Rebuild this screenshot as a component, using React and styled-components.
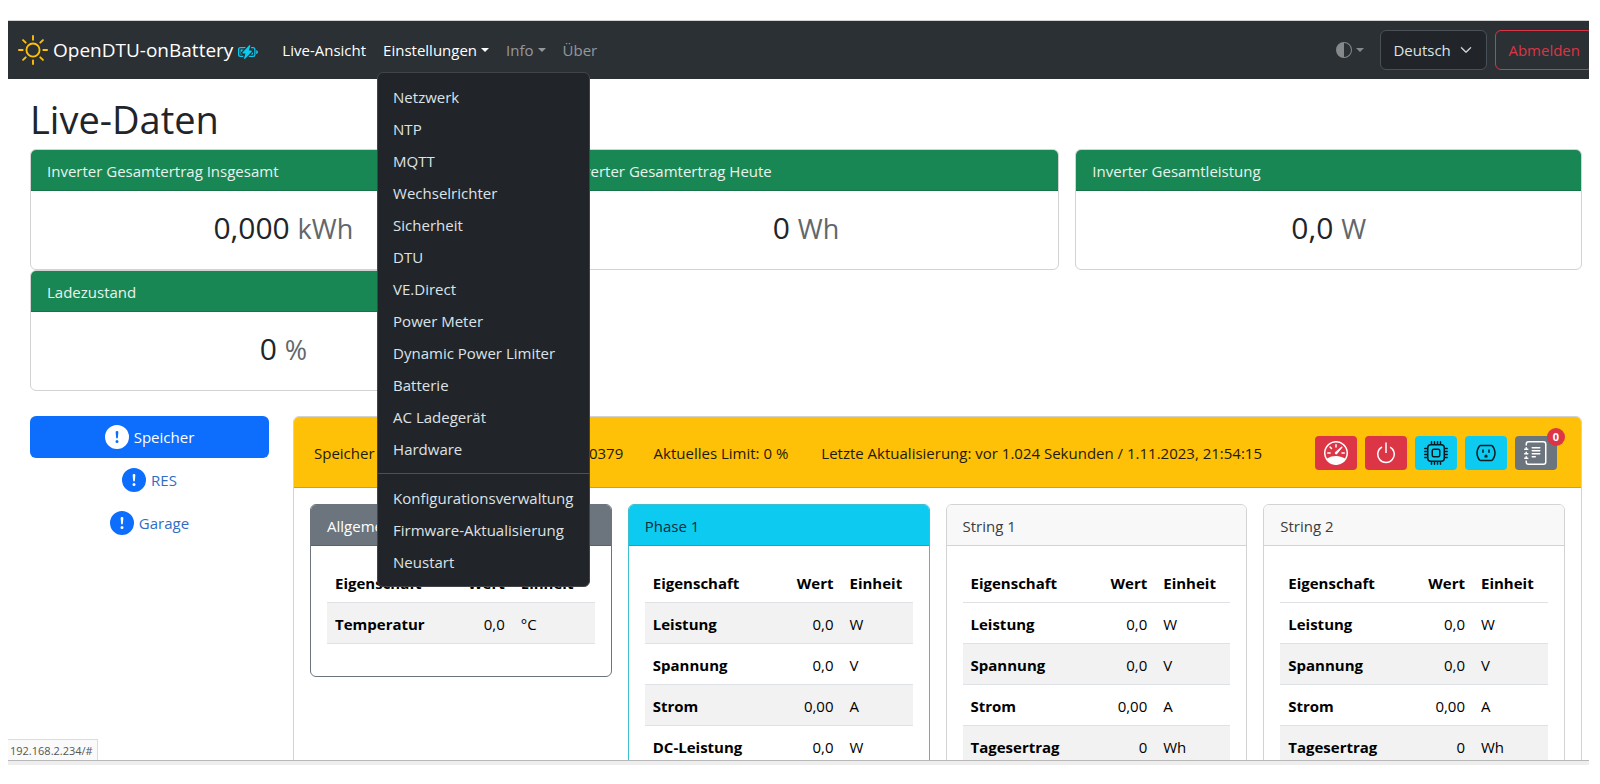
import React, { useState } from "react";
import styled, { createGlobalStyle } from "styled-components";
import {
    BsSun,
    BsBatteryCharging,
    BsCircleHalf,
    BsChevronDown,
    BsSpeedometer,
    BsPower,
    BsCpu,
    BsOutlet,
    BsJournalText,
    BsExclamationCircleFill,
} from "react-icons/bs";

const GlobalStyle = createGlobalStyle`
    *, *::before, *::after { box-sizing: border-box; }
    body {
        margin: 0;
        background: #fff;
        color: #212529;
        font-family: "Segoe UI", "Open Sans", "Noto Sans", sans-serif;
        font-size: 15px;
        line-height: 24px;
    }
    button, select { font: inherit; }
    a { text-decoration: none; }
`;

const Page = styled.div`
    display: flex;
    height: 100vh;
    padding: 20px 11px 19px 8px;
`;

const Viewport = styled.div`
    position: relative;
    flex: 1;
    min-width: 0;
    overflow: hidden;
    border-top: 1px solid #d4d4d4;
    border-bottom: 4px solid #eee;
`;

/* ---------- navbar ---------- */

const Navbar = styled.nav`
    display: flex;
    align-items: center;
    height: 58px;
    margin-right: -4px;
    padding-left: 10px;
    background: #2b3035;
`;

const Brand = styled.a`
    display: flex;
    align-items: center;
    gap: 5px;
    margin-right: 16px;
    color: #fff;
    font-size: 19px;
    line-height: 30px;
    white-space: nowrap;
`;

const SunIcon = styled(BsSun)`
    color: #ffc107;
`;

const BatteryIcon = styled(BsBatteryCharging)`
    color: #0dcaf0;
    margin-top: 4px;
`;

const NavLinks = styled.div`
    display: flex;
    gap: 1px;
`;

const NavItem = styled.div`
    position: relative;
`;

const NavLink = styled.a`
    display: flex;
    align-items: center;
    gap: 4px;
    padding: 8px;
    color: ${(p) => (p.$active ? "#fff" : "rgba(255, 255, 255, 0.5)")};
    white-space: nowrap;
`;

const Caret = styled.span`
    border-top: 4px solid;
    border-left: 4px solid transparent;
    border-right: 4px solid transparent;
`;

const Menu = styled.div`
    position: absolute;
    top: 42px;
    left: 2px;
    z-index: 10;
    width: 213px;
    padding: 8px 0;
    background: #212529;
    border: 1px solid #41454a;
    border-radius: 6px;
`;

const MenuItem = styled.a`
    display: block;
    padding: 4px 15px;
    color: #dee2e6;
    white-space: nowrap;
`;

const MenuDivider = styled.hr`
    margin: 8px 0;
    border: 0;
    border-top: 1px solid #4d5154;
`;

const NavRight = styled.div`
    display: flex;
    align-items: center;
    gap: 8px;
    margin-left: auto;
`;

const ThemeButton = styled.button`
    display: flex;
    align-items: center;
    gap: 4px;
    padding: 8px;
    background: none;
    border: 0;
    color: #85898c;
`;

const LanguageBox = styled.div`
    position: relative;
    display: flex;
    align-items: center;
    color: #dee2e6;

    svg {
        position: absolute;
        right: 15px;
        pointer-events: none;
    }
`;

const LanguageSelect = styled.select`
    width: 107px;
    height: 40px;
    padding: 0 12px;
    appearance: none;
    color: #dee2e6;
    background: #212529;
    border: 1px solid #495057;
    border-radius: 6px;
`;

const LogoutButton = styled.button`
    height: 40px;
    padding: 0 12px;
    color: #dc3545;
    background: none;
    border: 1px solid #dc3545;
    border-radius: 6px;
`;

/* ---------- content ---------- */

const Content = styled.main`
    padding: 16px 7px 0 22px;
`;

const Title = styled.h1`
    margin: 0 0 6px;
    font-size: 38px;
    font-weight: 400;
    line-height: 48px;
`;

const Totals = styled.div`
    display: grid;
    grid-template-columns: repeat(3, 1fr);
    column-gap: 16px;
`;

const cardColors = {
    success: { bg: "#198754", color: "#e8f3ee", line: "#d3d3d3", rule: "#157347" },
    secondary: { bg: "#6c757d", color: "#fff", line: "#6c757d", rule: "#5b636a" },
    info: { bg: "#0dcaf0", color: "#0b2e3a", line: "#3cc0d0", rule: "#0bacc9" },
    light: { bg: "#f8f8f8", color: "#383d42", line: "#d3d3d3", rule: "#d3d3d3" },
};

const Card = styled.section`
    border: 1px solid ${(p) => cardColors[p.$variant].line};
    border-radius: 6px;
    overflow: hidden;
`;

const CardHeader = styled.div`
    padding: 9px 16px 7px;
    color: ${(p) => cardColors[p.$variant].color};
    background: ${(p) => cardColors[p.$variant].bg};
    border-bottom: 1px solid ${(p) => cardColors[p.$variant].rule};
`;

const TotalValue = styled.h2`
    margin: 0;
    padding: 18px 16px 22px;
    font-size: 30px;
    font-weight: 400;
    line-height: 38px;
    text-align: center;

    small {
        color: #62676b;
        font-size: 27px;
        line-height: 30px;
    }
`;

const Inverters = styled.div`
    display: grid;
    grid-template-columns: 239px 1fr;
    align-items: start;
    gap: 24px;
    margin-top: 25px;
`;

const Pills = styled.div`
    display: flex;
    flex-direction: column;
    gap: 1px;
`;

const Pill = styled.button`
    display: flex;
    align-items: center;
    justify-content: center;
    gap: 5px;
    height: 42px;
    color: ${(p) => (p.$active ? "#fff" : "#2f6ec4")};
    background: ${(p) => (p.$active ? "#0d6efd" : "none")};
    border: 0;
    border-radius: 6px;

    svg {
        color: ${(p) => (p.$active ? "#fff" : "#0d6efd")};
    }
`;

const Panel = styled.section`
    border: 1px solid #d3d3d3;
    border-radius: 6px;
`;

const PanelHeader = styled.div`
    display: flex;
    align-items: center;
    justify-content: space-between;
    height: 71px;
    padding: 2px 24px 0 20px;
    color: #1f1a08;
    background: #ffc107;
    border-bottom: 1px solid #c9a227;
    border-radius: 5px 5px 0 0;
`;

const PanelInfo = styled.div`
    display: flex;
    gap: 33px;
    white-space: nowrap;
`;

const SerialNumber = styled.div`
    width: 213px;
    text-align: right;
`;

const Tools = styled.div`
    display: flex;
    gap: 8px;
`;

const toolColors = {
    danger: { bg: "#dc3545", color: "#fff" },
    info: { bg: "#0dcaf0", color: "#051b20" },
    secondary: { bg: "#6c757d", color: "#fff" },
};

const ToolButton = styled.button`
    position: relative;
    display: flex;
    align-items: center;
    justify-content: center;
    width: 42px;
    height: 34px;
    padding: 0;
    color: ${(p) => toolColors[p.$variant].color};
    background: ${(p) => toolColors[p.$variant].bg};
    border: 0;
    border-radius: 4px;
`;

const Badge = styled.span`
    position: absolute;
    top: -8px;
    right: -8px;
    width: 18px;
    height: 18px;
    color: #fff;
    background: #dc3545;
    border-radius: 9px;
    font-size: 11px;
    font-weight: 700;
    line-height: 18px;
`;

const Channels = styled.div`
    display: grid;
    grid-template-columns: repeat(4, 1fr);
    align-items: start;
    gap: 16px;
    padding: 16px;
`;

const TableBox = styled.div`
    padding: 16px 16px 32px;
`;

const Table = styled.table`
    width: 100%;
    border-collapse: collapse;
    color: #000;

    th, td {
        padding: 9px 8px 7px;
        border-bottom: 1px solid #dee2e6;
        text-align: left;
        font-weight: 400;
        white-space: nowrap;
    }
    th { font-weight: 700; }
    th:nth-child(2), td:nth-child(2) { text-align: right; }
    th:nth-child(3) { width: ${(p) => p.$unitWidth}px; }
    tbody tr:nth-child(${(p) => p.$stripe}) { background: #f2f2f2; }
`;

const StatusText = styled.div`
    position: absolute;
    left: 0;
    bottom: 0;
    height: 22px;
    padding: 0 4px 0 2px;
    color: #555;
    background: #fafafa;
    border: 1px solid #dcdcdc;
    border-left: 0;
    font-size: 11px;
    line-height: 22px;
`;

const BottomLine = styled.div`
    position: absolute;
    left: 0;
    right: 0;
    bottom: 0;
    border-top: 1px solid #b8b8b8;
`;

const settings = [
    "Netzwerk",
    "NTP",
    "MQTT",
    "Wechselrichter",
    "Sicherheit",
    "DTU",
    "VE.Direct",
    "Power Meter",
    "Dynamic Power Limiter",
    "Batterie",
    "AC Ladegerät",
    "Hardware",
];
const maintenance = ["Konfigurationsverwaltung", "Firmware-Aktualisierung", "Neustart"];

const totals = [
    { title: "Inverter Gesamtertrag Insgesamt", value: "0,000", unit: "kWh" },
    { title: "Inverter Gesamtertrag Heute", value: "0", unit: "Wh" },
    { title: "Inverter Gesamtleistung", value: "0,0", unit: "W" },
    { title: "Ladezustand", value: "0", unit: "%" },
];

const inverters = ["Speicher", "RES", "Garage"];

const stringRows = [
    ["Leistung", "0,0", "W"],
    ["Spannung", "0,0", "V"],
    ["Strom", "0,00", "A"],
    ["Tagesertrag", "0", "Wh"],
];

const channels = [
    { title: "Allgemein", variant: "secondary", stripe: "odd", unitWidth: 82, rows: [["Temperatur", "0,0", "°C"]] },
    {
        title: "Phase 1",
        variant: "info",
        stripe: "odd",
        unitWidth: 71,
        rows: [
            ["Leistung", "0,0", "W"],
            ["Spannung", "0,0", "V"],
            ["Strom", "0,00", "A"],
            ["DC-Leistung", "0,0", "W"],
        ],
    },
    { title: "String 1", variant: "light", stripe: "even", unitWidth: 75, rows: stringRows },
    { title: "String 2", variant: "light", stripe: "even", unitWidth: 75, rows: stringRows },
];

const tools = [
    { label: "Limit", variant: "danger", Icon: BsSpeedometer },
    { label: "Ein/Aus", variant: "danger", Icon: BsPower },
    { label: "Geräteinfo", variant: "info", Icon: BsCpu },
    { label: "Netzprofil", variant: "info", Icon: BsOutlet },
    { label: "Ereignisse", variant: "secondary", Icon: BsJournalText, count: 0 },
];

function Header() {
    const [menuOpen, setMenuOpen] = useState(true);
    const [language, setLanguage] = useState("de");

    return (
        <Navbar>
            <Brand href="#">
                <SunIcon size={30} />
                OpenDTU-onBattery
                <BatteryIcon size={20} />
            </Brand>
            <NavLinks>
                <NavLink href="#" $active>Live-Ansicht</NavLink>
                <NavItem>
                    <NavLink href="#" $active onClick={() => setMenuOpen(!menuOpen)}>
                        Einstellungen<Caret />
                    </NavLink>
                    {menuOpen && (
                        <Menu>
                            {settings.map((name) => <MenuItem key={name} href="#">{name}</MenuItem>)}
                            <MenuDivider />
                            {maintenance.map((name) => <MenuItem key={name} href="#">{name}</MenuItem>)}
                        </Menu>
                    )}
                </NavItem>
                <NavLink href="#">Info<Caret /></NavLink>
                <NavLink href="#">Über</NavLink>
            </NavLinks>
            <NavRight>
                <ThemeButton aria-label="Farbschema"><BsCircleHalf size={16} /><Caret /></ThemeButton>
                <LanguageBox>
                    <LanguageSelect aria-label="Sprache" value={language} onChange={(e) => setLanguage(e.target.value)}>
                        <option value="de">Deutsch</option>
                        <option value="en">English</option>
                        <option value="fr">Français</option>
                    </LanguageSelect>
                    <BsChevronDown size={12} strokeWidth={1} />
                </LanguageBox>
                <LogoutButton>Abmelden</LogoutButton>
            </NavRight>
        </Navbar>
    );
}

function ChannelCard({ title, variant, stripe, unitWidth, rows }) {
    return (
        <Card $variant={variant}>
            <CardHeader $variant={variant}>{title}</CardHeader>
            <TableBox>
                <Table $stripe={stripe} $unitWidth={unitWidth}>
                    <thead>
                        <tr>
                            <th scope="col">Eigenschaft</th>
                            <th scope="col">Wert</th>
                            <th scope="col">Einheit</th>
                        </tr>
                    </thead>
                    <tbody>
                        {rows.map(([name, value, unit]) => (
                            <tr key={name}>
                                <th scope="row">{name}</th>
                                <td>{value}</td>
                                <td>{unit}</td>
                            </tr>
                        ))}
                    </tbody>
                </Table>
            </TableBox>
        </Card>
    );
}

export default function App() {
    const [selected, setSelected] = useState("Speicher");

    return (
        <Page>
            <GlobalStyle />
            <Viewport>
                <Header />
                <Content>
                    <Title>Live-Daten</Title>
                    <Totals>
                        {totals.map((t) => (
                            <Card key={t.title} $variant="success">
                                <CardHeader $variant="success">{t.title}</CardHeader>
                                <TotalValue>{t.value} <small>{t.unit}</small></TotalValue>
                            </Card>
                        ))}
                    </Totals>
                    <Inverters>
                        <Pills>
                            {inverters.map((name) => (
                                <Pill key={name} $active={name === selected} onClick={() => setSelected(name)}>
                                    <BsExclamationCircleFill size={24} />
                                    {name}
                                </Pill>
                            ))}
                        </Pills>
                        <Panel>
                            <PanelHeader>
                                <PanelInfo>
                                    <div>{selected}</div>
                                    <SerialNumber>Seriennummer: 112100120379</SerialNumber>
                                    <div>Aktuelles Limit: 0 %</div>
                                    <div>Letzte Aktualisierung: vor 1.024 Sekunden / 1.11.2023, 21:54:15</div>
                                </PanelInfo>
                                <Tools>
                                    {tools.map(({ label, variant, Icon, count }) => (
                                        <ToolButton key={label} aria-label={label} $variant={variant}>
                                            <Icon size={24} />
                                            {count !== undefined && <Badge>{count}</Badge>}
                                        </ToolButton>
                                    ))}
                                </Tools>
                            </PanelHeader>
                            <Channels>
                                {channels.map((c) => <ChannelCard key={c.title} {...c} />)}
                            </Channels>
                        </Panel>
                    </Inverters>
                </Content>
                <StatusText>192.168.2.234/#</StatusText>
                <BottomLine />
            </Viewport>
        </Page>
    );
}
